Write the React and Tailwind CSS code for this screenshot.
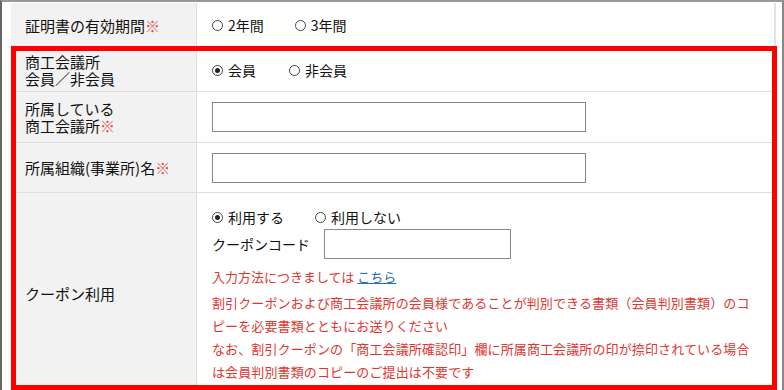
import React from 'react';

const font = { fontFamily: '"Noto Sans CJK JP", "Noto Sans", sans-serif' };

const Radio = ({ checked, label }) => (
  <label className="flex items-center">
    <span className="w-[11px] h-[11px] rounded-full border border-[#444] bg-white flex items-center justify-center mr-[5px]">
      {checked && <span className="w-[5px] h-[5px] rounded-full bg-[#222]"></span>}
    </span>
    <span>{label}</span>
  </label>
)

const Req = () => <span className="text-[#f04a4a]">※</span>

const Line = ({ children }) => <div className="h-[17px] leading-[17px] overflow-visible">{children}</div>

const App = () => {
  return (
    <div style={font} className="relative w-[784px] h-[390px] overflow-hidden bg-white border-l-2 border-t-2 border-r-2 border-l-[#666] border-t-[#999] border-r-[#888] text-[14px] text-[#111]">
      <div className="ml-[9px] mt-[1px] w-[765px] border-r-2 border-[#e3e3e3] grid grid-cols-[185px_1fr]">
        {/* row 1 */}
        <div className="h-[46px] bg-[#f2f2f2] border-b border-[#ddd] px-[14px] flex items-center text-[15px] leading-[17px]">
          <span>証明書の有効期間<Req /></span>
        </div>
        <div className="h-[46px] border-b border-l border-[#ddd] pl-[15px] flex items-center gap-[31px]">
          <Radio label="2年間" />
          <Radio label="3年間" />
        </div>

        {/* row 2 */}
        <div className="h-[43px] bg-[#f2f2f2] border-b border-[#ddd] px-[14px] flex flex-col justify-center text-[15px]">
          <Line>商工会議所</Line>
          <Line>会員／非会員</Line>
        </div>
        <div className="h-[43px] border-b border-l border-[#ddd] pl-[15px] flex items-center gap-[33px]">
          <Radio checked label="会員" />
          <Radio label="非会員" />
        </div>

        {/* row 3 */}
        <div className="h-[51px] bg-[#f2f2f2] border-b border-[#ddd] px-[14px] flex flex-col justify-center text-[15px]">
          <Line>所属している</Line>
          <Line>商工会議所<Req /></Line>
        </div>
        <div className="h-[51px] border-b border-l border-[#ddd] pl-[15px] flex items-center">
          <input type="text" className="w-[374px] h-[30px] border border-[#888] bg-white outline-none" />
        </div>

        {/* row 4 */}
        <div className="h-[50px] bg-[#f2f2f2] border-b border-[#ddd] px-[14px] flex items-center text-[15px] leading-[17px]">
          <span>所属組織(事業所)名<Req /></span>
        </div>
        <div className="h-[50px] border-b border-l border-[#ddd] pl-[15px] flex items-center">
          <input type="text" className="w-[374px] h-[30px] border border-[#888] bg-white outline-none" />
        </div>

        {/* row 5 coupon */}
        <div className="h-[200px] bg-[#f2f2f2] px-[14px] flex items-center text-[15px] leading-[17px]">
          <span>クーポン利用</span>
        </div>
        <div className="h-[200px] border-l border-[#ddd] pl-[15px] pt-[14px]">
          <div className="flex items-center gap-[31px] h-[20px]">
            <Radio checked label="利用する" />
            <Radio label="利用しない" />
          </div>
          <div className="flex items-center mt-[2px]">
            <span className="mr-[14px]">クーポンコード</span>
            <input type="text" className="w-[187px] h-[30px] border border-[#888] bg-white outline-none" />
          </div>
          <div className="mt-[8px] h-[20px] leading-[20px] text-[13px] text-[#e0362f]">
            入力方法につきましては <a href="#" className="text-[#2a6db5] underline">こちら</a>
          </div>
          <div className="mt-[4px] text-[13px] leading-[23px] tracking-[0.12px] text-[#e0362f] whitespace-nowrap">
            <div>割引クーポンおよび商工会議所の会員様であることが判別できる書類（会員判別書類）のコ</div>
            <div>ピーを必要書類とともにお送りください</div>
            <div>なお、割引クーポンの「商工会議所確認印」欄に所属商工会議所の印が捺印されている場合</div>
            <div>は会員判別書類のコピーのご提出は不要です</div>
          </div>
        </div>
      </div>

      {/* red highlight frame */}
      <div className="absolute left-[9px] top-[44px] w-[766px] h-[344px] border-[5px] border-[#ff0000] pointer-events-none"></div>
    </div>
  )
}

export default App
